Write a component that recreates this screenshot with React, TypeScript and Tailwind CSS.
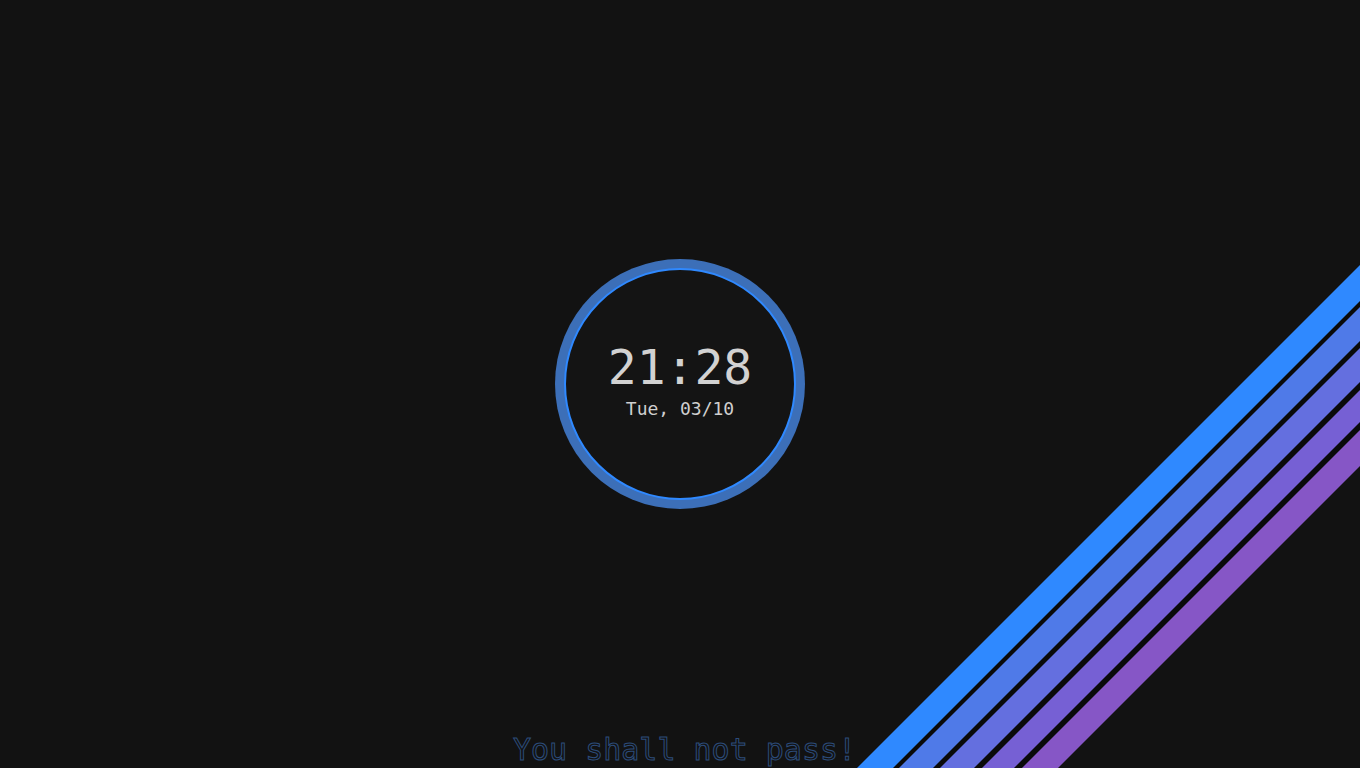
import React from "react";

const bands: { a: number; b: number; color: string }[] = [
  { a: 1625, b: 1661, color: "#2f89ff" },
  { a: 1667, b: 1701, color: "#4f7ae8" },
  { a: 1708, b: 1742, color: "#646fdf" },
  { a: 1750, b: 1782, color: "#7660d4" },
  { a: 1790, b: 1826, color: "#8656c6" },
];

function poly(a: number, b: number) {
  return `${a - 768},768 1360,${a - 1360} 1360,${b - 1360} ${b - 768},768`;
}

export default function App() {
  return (
    <div className="relative w-full h-screen overflow-hidden bg-[#121212] font-['DejaVu_Sans_Mono','Liberation_Mono',monospace]">
      <svg
        className="absolute inset-0"
        width="1360"
        height="768"
        viewBox="0 0 1360 768"
      >
        <polygon points={poly(1661, 1790)} fill="#0a0a0a" />
        {bands.map((b, i) => (
          <polygon key={i} points={poly(b.a, b.b)} fill={b.color} />
        ))}
      </svg>

      <div className="relative flex h-full items-center justify-center">
        <div className="flex h-[250px] w-[250px] items-center justify-center rounded-full bg-[#3c6fb8]">
          <div className="flex h-[232px] w-[232px] flex-col items-center justify-center rounded-full border-2 border-[#2f89ff] bg-[#141414]">
            <div className="mt-[-7px] text-[48px] leading-none text-[#d2d2d2]">21:28</div>
            <div className="mt-[9px] text-[18px] leading-none text-[#cfcfcf]">Tue, 03/10</div>
          </div>
        </div>
      </div>

      <div className="absolute bottom-[-2px] left-0 right-0 pl-[9px] text-center text-[30px] leading-[40px] text-transparent [-webkit-text-stroke:1px_#2c4c7a]">
        You shall not pass!
      </div>
    </div>
  );
}
